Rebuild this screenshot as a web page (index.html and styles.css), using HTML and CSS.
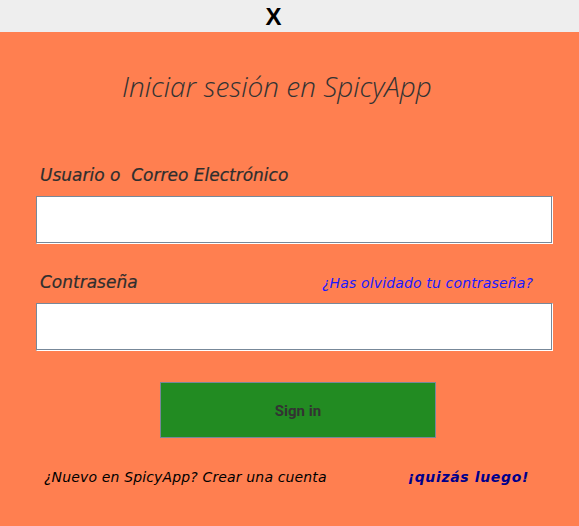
FILE: index.html
```html
<!DOCTYPE html>
<html lang="es">
<head>
<meta charset="utf-8">
<title>SpicyApp</title>
<link rel="stylesheet" href="styles.css">
</head>
<body>
<div class="titlebar"><span class="close">X</span></div>
<main class="panel">
  <h1 class="title">Iniciar sesión en SpicyApp</h1>
  <label class="label label-user" for="user">Usuario o&nbsp; Correo Electrónico</label>
  <input class="field" id="user" type="text">
  <div class="row">
    <label class="label" for="pass">Contraseña</label>
    <a class="forgot" href="#">¿Has olvidado tu contraseña?</a>
  </div>
  <input class="field" id="pass" type="password">
  <div class="actions"><button class="signin" type="button">Sign in</button></div>
  <div class="footer">
    <span class="new">¿Nuevo en SpicyApp? Crear una cuenta</span>
    <a class="later" href="#">¡quizás luego!</a>
  </div>
</main>
</body>
</html>
```
FILE: styles.css
```css
html, body {
  margin: 0;
  padding: 0;
  height: 100%;
}
body {
  display: flex;
  flex-direction: column;
  background: #ff7f50;
  font-family: "DejaVu Sans", "Open Sans", sans-serif;
}
.titlebar {
  height: 32px;
  background: #eeeeee;
  display: flex;
  justify-content: center;
  align-items: center;
  padding-right: 32px;
  box-sizing: border-box;
}
.close {
  font-family: "Liberation Sans", Arial, sans-serif;
  font-weight: 700;
  font-size: 24px;
  line-height: 24px;
  color: #000;
  padding-top: 2px;
}
.panel {
  flex: 1;
  background: #ff7f50;
  display: flex;
  flex-direction: column;
  padding: 37px 26px 0 36px;
}
.title {
  margin: 0 0 62px 86px;
  font-family: "Open Sans", sans-serif;
  font-size: 28px;
  line-height: 34px;
  font-weight: 300;
  font-style: italic;
  color: #333333;
}
.label {
  font-size: 17px;
  line-height: 20px;
  font-style: italic;
  font-weight: 400;
  color: #2e2e2e;
  padding-left: 4px;
  -webkit-text-stroke: 0.2px #2e2e2e;
}
.label-user {
  margin-bottom: 11px;
}
.field {
  box-sizing: border-box;
  width: 517px;
  height: 48px;
  margin: 0;
  background: #ffffff;
  border: 1px solid;
  border-color: #778899 #ffffff #ffffff #778899;
  box-shadow: inset -1px -1px 0 #778899;
  outline: none;
}
.row {
  display: flex;
  align-items: baseline;
  justify-content: space-between;
  margin: 28px 0 11px 0;
  width: 497px;
}
.forgot {
  font-size: 14px;
  font-style: italic;
  letter-spacing: 0.15px;
  color: #1a1aff;
  text-decoration: none;
}
.actions {
  margin-top: 31px;
  padding-left: 124px;
}
.signin {
  width: 276px;
  height: 56px;
  background: #228b22;
  border: 1px solid #778899;
  font-family: Roboto, "Liberation Sans", sans-serif;
  font-weight: 700;
  font-size: 15px;
  color: #333333;
  padding: 2px 0 0 0;
}
.footer {
  margin-top: 29px;
  display: flex;
  align-items: baseline;
  line-height: 20px;
  padding-left: 8px;
  width: 485px;
  justify-content: space-between;
}
.new {
  font-size: 14px;
  font-style: italic;
  letter-spacing: 0.15px;
  color: #000000;
}
.later {
  font-size: 14px;
  font-style: italic;
  font-weight: 700;
  letter-spacing: 0.65px;
  color: #00008b;
  text-decoration: none;
}
```
